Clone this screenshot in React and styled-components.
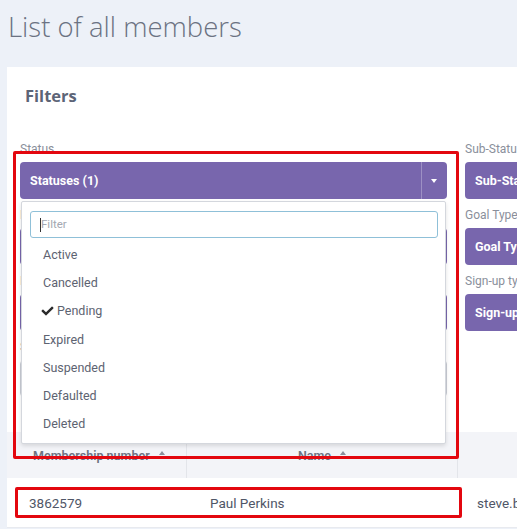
import React from 'react';
import styled, { createGlobalStyle } from 'styled-components';

const GlobalStyle = createGlobalStyle`
  body {
    margin: 0;
    background: #edf1f8;
    font-family: Roboto, "Liberation Sans", sans-serif;
  }
`;

const statuses = ['Active', 'Cancelled', 'Pending', 'Expired', 'Suspended', 'Defaulted', 'Deleted'];

const leftFields = [
  { label: 'Membership type', value: 'Membership types' },
  { label: 'Payment method', value: 'Payment methods' },
  { label: 'Search', value: '', input: true },
];

const rightFields = [
  { label: 'Sub-Status', value: 'Sub-Statuses' },
  { label: 'Goal Type', value: 'Goal Types' },
  { label: 'Sign-up type', value: 'Sign-up types' },
];

export default function App() {
  return (
    <>
      <GlobalStyle />
      <Page>
        <Title>List of all members</Title>
        <Card>
          <CardTitle>Filters</CardTitle>
          <FilterGrid>
            <Column>
              <Field>
                <Label>Status</Label>
                <SelectButton>
                  Statuses (1)
                  <Toggle><Caret /></Toggle>
                </SelectButton>
                <Menu>
                  <FilterInput>
                    <TextCursor />
                    Filter
                  </FilterInput>
                  {statuses.map((s) => (
                    <MenuItem key={s} checked={s === 'Pending'}>
                      {s === 'Pending' && (
                        <Check viewBox="0 0 512 512">
                          <path d="M173.9 439.4L7.5 273c-10-10-10-26.2 0-36.2l36.2-36.2c10-10 26.2-10 36.2 0L192 312.7 432.1 72.6c10-10 26.2-10 36.2 0l36.2 36.2c10 10 10 26.2 0 36.2L210.1 439.4c-10 10-26.2 10-36.2 0z" />
                        </Check>
                      )}
                      {s}
                    </MenuItem>
                  ))}
                </Menu>
              </Field>
              {leftFields.map((f) => (
                <Field key={f.label}>
                  <Label>{f.label}</Label>
                  {f.input ? <PlainInput /> : <SelectButton>{f.value}</SelectButton>}
                </Field>
              ))}
            </Column>
            <Column>
              {rightFields.map((f) => (
                <Field key={f.label}>
                  <Label>{f.label}</Label>
                  <SelectButton>{f.value}</SelectButton>
                </Field>
              ))}
            </Column>
          </FilterGrid>

          <Table>
            <HeadCell>
              Membership number <SortArrow />
            </HeadCell>
            <HeadCell center>
              Name <SortArrow />
            </HeadCell>
            <HeadCell />
            <BodyCell pad="22px">3862579</BodyCell>
            <BodyCell pad="23px">Paul Perkins</BodyCell>
            <BodyCell pad="19px">steve.bennett@example.com</BodyCell>
          </Table>
        </Card>

        <Highlight top={151} left={13} width={446} height={308} />
        <Highlight top={487} left={15} width={447} height={31} />
      </Page>
    </>
  );
}

const Page = styled.div`
  position: relative;
  width: 517px;
  height: 529px;
  overflow: hidden;
  padding-left: 7px;
  box-sizing: border-box;
`;

const Title = styled.h1`
  margin: 0;
  padding: 9px 0 0 1px;
  height: 67px;
  box-sizing: border-box;
  font-family: "Open Sans", sans-serif;
  font-weight: 300;
  font-size: 27.5px;
  line-height: 36px;
  color: #6b7282;
`;

const Card = styled.div`
  width: 600px;
  background: #fff;
`;

const CardTitle = styled.h2`
  margin: 0;
  padding: 18px 0 0 18px;
  font-family: "Open Sans", sans-serif;
  font-weight: 700;
  font-size: 16.5px;
  line-height: 22px;
  color: #5c6476;
`;

const FilterGrid = styled.div`
  display: grid;
  grid-template-columns: 427px 1fr;
  column-gap: 18px;
  padding: 35px 0 0 13px;
  height: 290px;
`;

const Column = styled.div`
  display: flex;
  flex-direction: column;
  gap: 9px;
`;

const Field = styled.div`
  position: relative;
  display: flex;
  flex-direction: column;
`;

const Label = styled.label`
  height: 15px;
  margin-bottom: 5px;
  font-size: 12px;
  line-height: 15px;
  color: #8a8f9b;
  white-space: nowrap;
`;

const SelectButton = styled.div`
  position: relative;
  height: 37px;
  border-radius: 4px;
  background: #7866ad;
  color: #fff;
  font-size: 12.5px;
  font-weight: 700;
  line-height: 37px;
  padding-left: 10px;
  white-space: nowrap;
  overflow: hidden;
`;

const PlainInput = styled.div`
  height: 37px;
  box-sizing: border-box;
  border: 1px solid #c9ccd4;
  border-radius: 4px;
`;

const Toggle = styled.span`
  position: absolute;
  top: 0;
  right: 0;
  width: 25px;
  height: 100%;
  border-left: 1px solid rgba(255, 255, 255, 0.28);
  display: flex;
  align-items: center;
  justify-content: center;
`;

const Caret = styled.span`
  width: 0;
  height: 0;
  border-left: 3.5px solid transparent;
  border-right: 3.5px solid transparent;
  border-top: 4px solid #fff;
  margin-right: 1px;
`;

const Menu = styled.div`
  position: absolute;
  top: 59px;
  left: 1px;
  right: 1px;
  height: 243px;
  box-sizing: border-box;
  background: #fff;
  border: 1px solid #d4d7dd;
  border-radius: 2px;
  box-shadow: 0 2px 4px rgba(0, 0, 0, 0.12);
  padding: 9px 7px 0 8px;
  z-index: 5;
`;

const FilterInput = styled.div`
  position: relative;
  height: 27px;
  box-sizing: border-box;
  border: 1px solid #8fc0d8;
  border-radius: 3px;
  padding-left: 10px;
  font-size: 11.5px;
  line-height: 25px;
  color: #a3a8b1;
  margin-bottom: 2px;
`;

const TextCursor = styled.span`
  position: absolute;
  left: 9px;
  top: 6px;
  width: 1px;
  height: 14px;
  background: #333;
`;

const MenuItem = styled.div`
  display: flex;
  align-items: center;
  height: 28.3px;
  padding-left: ${({ checked }) => (checked ? '11px' : '13px')};
  font-size: 12.5px;
  color: #5d6371;
`;

const Check = styled.svg`
  width: 13px;
  height: 12px;
  margin-right: 3px;
  fill: #2b2b2b;
`;

const Table = styled.div`
  display: grid;
  grid-template-columns: 180px 271px 1fr;
`;

const HeadCell = styled.div`
  height: 46px;
  background: #f3f4f8;
  border-right: 1px solid #e3e5ea;
  display: flex;
  align-items: center;
  justify-content: ${({ center }) => (center ? 'center' : 'flex-start')};
  padding-left: ${({ center }) => (center ? '0' : '26px')};
  font-size: 12.5px;
  font-weight: 600;
  color: #6c7282;
  white-space: nowrap;
  gap: 9px;
`;

const SortArrow = styled.span`
  width: 0;
  height: 0;
  border-left: 3px solid transparent;
  border-right: 3px solid transparent;
  border-bottom: 4px solid #8b909c;
  margin-bottom: 4px;
`;

const BodyCell = styled.div`
  height: 49px;
  border-bottom: 1px solid #e8eaef;
  display: flex;
  align-items: center;
  padding-left: ${({ pad }) => pad};
  font-size: 13.5px;
  color: #4f5667;
  white-space: nowrap;
`;

const Highlight = styled.div`
  position: absolute;
  top: ${({ top }) => top}px;
  left: ${({ left }) => left}px;
  width: ${({ width }) => width}px;
  height: ${({ height }) => height}px;
  box-sizing: border-box;
  border: 3px solid #e3070f;
  border-radius: 2px;
  z-index: 10;
  pointer-events: none;
`;
